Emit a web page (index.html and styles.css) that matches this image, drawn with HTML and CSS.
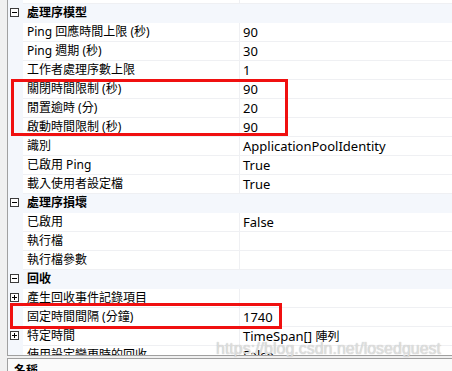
FILE: index.html
```html
<!DOCTYPE html>
<html lang="zh-Hant">
  <head>
    <meta charset="UTF-8" />
    <title>屬性</title>
    <link rel="stylesheet" href="styles.css">
  </head>
  <body>
    <div class="window">
      <div class="grid">
        <div class="row top"><div class="mark"></div><div class="name"></div><div class="value"></div></div>

        <!-- 處理序模型 -->
        <div class="row cat"><div class="mark"><span class="box"></span></div><div class="name">處理序模型</div></div>
        <div class="row"><div class="mark"></div><div class="name">Ping 回應時間上限 (秒)</div><div class="value">90</div></div>
        <div class="row"><div class="mark"></div><div class="name">Ping 週期 (秒)</div><div class="value">30</div></div>
        <div class="row"><div class="mark"></div><div class="name">工作者處理序數上限</div><div class="value">1</div></div>
        <div class="row"><div class="mark"></div><div class="name">關閉時間限制 (秒)</div><div class="value">90</div></div>
        <div class="row"><div class="mark"></div><div class="name">閒置逾時 (分)</div><div class="value">20</div></div>
        <div class="row"><div class="mark"></div><div class="name">啟動時間限制 (秒)</div><div class="value">90</div></div>
        <div class="row"><div class="mark"></div><div class="name">識別</div><div class="value">ApplicationPoolIdentity</div></div>
        <div class="row"><div class="mark"></div><div class="name">已啟用 Ping</div><div class="value">True</div></div>
        <div class="row"><div class="mark"></div><div class="name">載入使用者設定檔</div><div class="value">True</div></div>

        <!-- 處理序損壞 -->
        <div class="row cat"><div class="mark"><span class="box"></span></div><div class="name">處理序損壞</div></div>
        <div class="row"><div class="mark"></div><div class="name">已啟用</div><div class="value">False</div></div>
        <div class="row"><div class="mark"></div><div class="name">執行檔</div><div class="value"></div></div>
        <div class="row"><div class="mark"></div><div class="name">執行檔參數</div><div class="value"></div></div>

        <!-- 回收 -->
        <div class="row cat"><div class="mark"><span class="box"></span></div><div class="name">回收</div></div>
        <div class="row"><div class="mark"><span class="box plus"></span></div><div class="name">產生回收事件記錄項目</div><div class="value"></div></div>
        <div class="row"><div class="mark"></div><div class="name">固定時間間隔 (分鐘)</div><div class="value">1740</div></div>
        <div class="row"><div class="mark"><span class="box plus"></span></div><div class="name">特定時間</div><div class="value">TimeSpan[] <span class="cjk">陣列</span></div></div>
        <div class="row"><div class="mark"></div><div class="name">使用設定變更時的回收</div><div class="value">False</div></div>
      </div>

      <div class="desc">
        <div class="desc-title">名稱</div>
      </div>

      <div class="redbox first"></div>
      <div class="redbox second"></div>
      <div class="watermark">https://blog.csdn.net/losedguest</div>
    </div>
  </body>
</html>
```

FILE: styles.css
```css
* {
  margin: 0;
  padding: 0;
  box-sizing: border-box;
}

body {
  font-family: "Noto Sans", "Noto Sans CJK TC", sans-serif;
  font-size: 12px;
  color: #000;
  background-color: #f0f0f0;
}

.window {
  position: relative;
  width: 452px;
  height: 371px;
  padding-left: 7px;
  overflow: hidden;
}

.grid {
  height: 356px;
  background-color: #fff;
  border-left: 1px solid #a0a0a0;
  border-bottom: 1px solid #a0a0a0;
  overflow: hidden;
}

.row {
  display: flex;
  height: 19px;
  line-height: 18px;
  white-space: nowrap;
}

.row.top {
  height: 4px;
}

.mark {
  flex: none;
  width: 15px;
  padding: 4px 0 0 2px;
  background-color: #f4f7fc;
}

.name {
  flex: none;
  width: 216px;
  padding-left: 4px;
  border-bottom: 1px solid #eff0f3;
}

.value {
  flex: 1;
  padding-left: 3px;
  font-size: 13px;
  border-left: 1px solid #eff0f3;
  border-bottom: 1px solid #eff0f3;
}

.value .cjk {
  font-size: 12px;
}

.row.cat .name {
  flex: 1;
  font-weight: bold;
  background-color: #f4f7fc;
  border-bottom-color: #f4f7fc;
}

.box {
  position: relative;
  display: block;
  width: 9px;
  height: 9px;
  border: 1px solid #3c3c3c;
  background-color: #fff;
}

.box::before {
  content: "";
  position: absolute;
  left: 1px;
  top: 3px;
  width: 5px;
  height: 1px;
  background-color: #000;
}

.box.plus::after {
  content: "";
  position: absolute;
  left: 3px;
  top: 1px;
  width: 1px;
  height: 5px;
  background-color: #000;
}

.desc {
  margin-top: 2px;
  height: 40px;
  padding: 3px 0 0 6px;
  background-color: #fafafa;
  border: 1px solid #a0a0a0;
  border-right: none;
}

.desc-title {
  font-weight: bold;
  line-height: 18px;
}

.redbox {
  position: absolute;
  border: 3px solid #f01010;
}

.redbox.first {
  left: 11px;
  top: 79px;
  width: 277px;
  height: 57px;
}

.redbox.second {
  left: 10px;
  top: 303px;
  width: 272px;
  height: 26px;
}

.watermark {
  position: absolute;
  left: 216px;
  top: 340px;
  font-family: "Liberation Sans", Arial, sans-serif;
  font-size: 16px;
  color: rgba(240, 240, 240, 0.7);
  text-shadow: 0 0 1px #a8a8a8;
  white-space: nowrap;
}
```
